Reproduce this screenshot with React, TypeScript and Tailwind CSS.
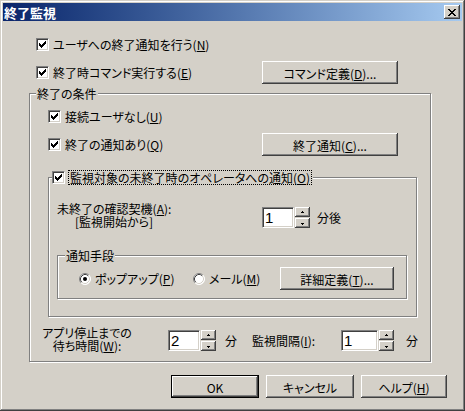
import React from 'react';

const raised =
  'shadow-[inset_-1px_-1px_#404040,inset_1px_1px_#ffffff,inset_-2px_-2px_#808080,inset_2px_2px_#d4d0c8]';
const sunken =
  'border border-t-[#808080] border-l-[#808080] border-b-white border-r-white shadow-[inset_1px_1px_#404040,inset_-1px_-1px_#d4d0c8]';
const etched = 'border border-[#808080] shadow-[inset_1px_1px_#ffffff,1px_1px_#ffffff]';

function Key({ text, k, after = '' }: { text: string; k: string; after?: string }) {
  return (
    <span className="whitespace-nowrap">
      {text}(<span className="underline underline-offset-1">{k}</span>){after}
    </span>
  );
}

function Check() {
  const rows: [number, number, number][] = [
    [6, 0, 1], [5, 1, 2], [0, 2, 1], [4, 2, 3], [0, 3, 2], [3, 3, 3], [0, 4, 5], [1, 5, 3], [2, 6, 1],
  ];
  return (
    <div className={`flex h-[13px] w-[13px] shrink-0 items-center justify-center bg-white ${sunken}`}>
      <svg width="7" height="7" viewBox="0 0 7 7" shapeRendering="crispEdges">
        {rows.map(([x, y, w], i) => (
          <rect key={i} x={x} y={y} width={w} height={1} fill="#000" />
        ))}
      </svg>
    </div>
  );
}

function Radio({ on }: { on?: boolean }) {
  return (
    <svg width="12" height="12" viewBox="0 0 12 12" className="shrink-0">
      <circle cx="6" cy="6" r="5.5" fill="#fff" />
      <path d="M2.11 9.89 A5.5 5.5 0 0 1 9.89 2.11" stroke="#808080" fill="none" />
      <path d="M9.89 2.11 A5.5 5.5 0 0 1 2.11 9.89" stroke="#ffffff" fill="none" />
      <path d="M2.82 9.18 A4.5 4.5 0 0 1 9.18 2.82" stroke="#404040" fill="none" />
      <path d="M9.18 2.82 A4.5 4.5 0 0 1 2.82 9.18" stroke="#d4d0c8" fill="none" />
      {on && <circle cx="6" cy="6" r="2" fill="#000" />}
    </svg>
  );
}

function Btn({
  className = '',
  children,
  isDefault,
}: {
  className?: string;
  children: React.ReactNode;
  isDefault?: boolean;
}) {
  return (
    <button
      className={`flex h-[23px] shrink-0 items-center justify-center whitespace-nowrap bg-[#d4d0c8] pt-[1px] text-black ${
        isDefault
          ? 'border border-black shadow-[inset_-1px_-1px_#404040,inset_1px_1px_#ffffff,inset_-2px_-2px_#808080,inset_2px_2px_#d4d0c8]'
          : raised
      } ${className}`}
    >
      {children}
    </button>
  );
}

function SpinBtn({ up }: { up?: boolean }) {
  return (
    <div className={`flex h-[10px] w-[15px] items-center justify-center bg-[#d4d0c8] ${raised}`}>
      <svg width="5" height="3" viewBox="0 0 5 3" shapeRendering="crispEdges">
        {up ? (
          <>
            <rect x="2" y="0" width="1" height="1" fill="#000" />
            <rect x="1" y="1" width="3" height="1" fill="#000" />
          </>
        ) : (
          <>
            <rect x="1" y="1" width="3" height="1" fill="#000" />
            <rect x="2" y="2" width="1" height="1" fill="#000" />
          </>
        )}
      </svg>
    </div>
  );
}

function Spin({ value, editW }: { value: string; editW: string }) {
  return (
    <div className="flex shrink-0 gap-[1px]">
      <div
        className={`h-[21px] ${editW} bg-white pl-[2px] font-['Liberation_Sans',sans-serif] text-[15px] leading-[19px] ${sunken}`}
      >
        {value}
      </div>
      <div className="flex flex-col gap-[1px]">
        <SpinBtn up />
        <SpinBtn />
      </div>
    </div>
  );
}

function CloseGlyph() {
  const rows: [number, number, number][] = [
    [0, 0, 2], [6, 0, 2], [1, 1, 2], [5, 1, 2], [2, 2, 4], [3, 3, 2], [2, 4, 4], [1, 5, 2], [5, 5, 2], [0, 6, 2], [6, 6, 2],
  ];
  return (
    <svg width="8" height="7" viewBox="0 0 8 7" shapeRendering="crispEdges">
      {rows.map(([x, y, w], i) => (
        <rect key={i} x={x} y={y} width={w} height={1} fill="#000" />
      ))}
    </svg>
  );
}

export default function App() {
  return (
    <div
      className="flex h-[411px] w-[465px] flex-col whitespace-nowrap bg-[#d4d0c8] p-[3px] font-['Noto_Sans_CJK_JP',sans-serif] text-[12px] leading-[13px] text-black [font-feature-settings:'palt'] shadow-[inset_-1px_-1px_#404040,inset_1px_1px_#d4d0c8,inset_-2px_-2px_#808080,inset_2px_2px_#ffffff]"
    >
      {/* title bar */}
      <div className="flex h-[18px] items-center justify-between bg-linear-to-r from-[#0a246a] to-[#a6caf0] pl-[1px] pr-[2px]">
        <span className="text-[13px] font-bold text-white [font-feature-settings:normal]">終了監視</span>
        <div className={`flex h-[14px] w-[16px] items-center justify-center bg-[#d4d0c8] ${raised}`}>
          <CloseGlyph />
        </div>
      </div>

      <div className="flex flex-col pl-[26px]">
        <div className="mt-[17px] flex h-[13px] items-center gap-[4px] pl-[7px]">
          <Check />
          <Key text="ユーザへの終了通知を行う" k="N" />
        </div>

        <div className="mt-[10px] flex h-[23px] items-center">
          <div className="flex w-[233px] items-center gap-[4px] pl-[7px]">
            <Check />
            <Key text="終了時コマンド実行する" k="E" />
          </div>
          <Btn className="w-[136px]">
            <Key text="コマンド定義" k="D" after="..." />
          </Btn>
        </div>

        {/* 終了の条件 */}
        <fieldset className={`mt-[3px] w-[402px] pb-[9px] ${etched}`}>
          <legend className="ml-[6px] bg-[#d4d0c8] px-[1px] leading-[13px]">終了の条件</legend>

          <div className="mt-[10px] flex h-[13px] items-center gap-[4px] pl-[18px]">
            <Check />
            <Key text="接続ユーザなし" k="U" />
          </div>

          <div className="mt-[10px] flex h-[23px] items-center">
            <div className="flex w-[232px] items-center gap-[4px] pl-[18px]">
              <Check />
              <Key text="終了の通知あり" k="Q" />
            </div>
            <Btn className="w-[136px]">
              <Key text="終了通知" k="C" after="..." />
            </Btn>
          </div>

          {/* 監視対象 */}
          <fieldset className={`ml-[18px] mt-[14px] w-[369px] pb-[17px] ${etched}`}>
            <legend className="ml-[3px] bg-[#d4d0c8]">
              <span className="flex items-center gap-[3px] pr-[1px]">
                <Check />
                <span className="border border-dotted border-black px-[1px] leading-[13px]">
                  <Key text="監視対象の未終了時のオペレータへの通知" k="O" />
                </span>
              </span>
            </legend>

            <div className="mt-[17px] flex items-start">
              <div className="ml-[8px] w-[114px] shrink-0 text-center leading-[13px]">
                <div>
                  <Key text="未終了の確認契機" k="A" after=":" />
                </div>
                <div>[監視開始から]</div>
              </div>
              <div className="ml-[91px] mt-[5px] flex items-center">
                <Spin value="1" editW="w-[32px]" />
                <span className="ml-[7px]">分後</span>
              </div>
            </div>

            {/* 通知手段 */}
            <fieldset className={`ml-[8px] mt-[21px] w-[350px] pb-[8px] ${etched}`}>
              <legend className="ml-[7px] bg-[#d4d0c8] px-[1px] leading-[13px]">通知手段</legend>
              <div className="mt-[5px] flex h-[23px] items-center pl-[21px]">
                <div className="flex w-[114px] items-center gap-[4px]">
                  <Radio on />
                  <Key text="ポップアップ" k="P" />
                </div>
                <div className="flex w-[87px] items-center gap-[4px]">
                  <Radio />
                  <Key text="メール" k="M" />
                </div>
                <Btn className="w-[114px]">
                  <Key text="詳細定義" k="T" after="..." />
                </Btn>
              </div>
            </fieldset>
          </fieldset>

          <div className="mt-[9px] flex items-start pl-[12px]">
            <div className="w-[90px] shrink-0 text-center leading-[13px]">
              <div>アプリ停止までの</div>
              <div>
                <Key text="待ち時間" k="W" after=":" />
              </div>
            </div>
            <div className="ml-[36px] mt-[4px] flex items-center">
              <Spin value="2" editW="w-[32px]" />
              <span className="ml-[9px]">分</span>
              <span className="ml-[15px] w-[89px]">
                <Key text="監視間隔" k="I" after=":" />
              </span>
              <Spin value="1" editW="w-[37px]" />
              <span className="ml-[12px]">分</span>
            </div>
          </div>
        </fieldset>

        <div className="ml-[142px] mt-[13px] flex gap-[7px]">
          <Btn className="w-[88px]" isDefault>
            OK
          </Btn>
          <Btn className="w-[88px]">キャンセル</Btn>
          <Btn className="w-[86px]">
            <Key text="ヘルプ" k="H" />
          </Btn>
        </div>
      </div>
    </div>
  );
}
